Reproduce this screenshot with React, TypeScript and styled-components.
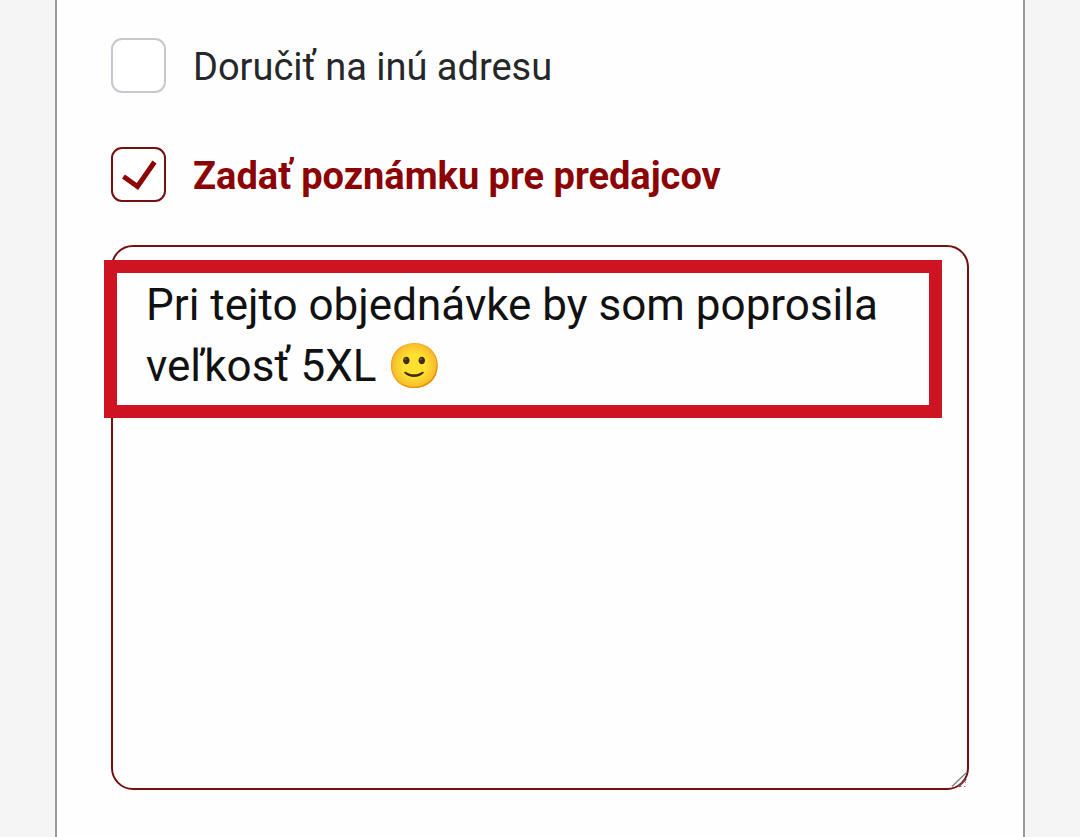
import React, { useState } from "react";
import styled, { createGlobalStyle } from "styled-components";

const GlobalStyle = createGlobalStyle`
  *, *::before, *::after { box-sizing: border-box; }
  html { background: #f5f5f5; }
  body {
    margin: 0;
    font-family: Roboto, "Liberation Sans", sans-serif;
    color: #222426;
  }
`;

const Page = styled.div`
  padding: 0 55px;
`;

const Panel = styled.main`
  min-height: 100vh;
  padding: 38px 54px 47px;
  background: #fefefe;
  border: solid #999b9d;
  border-width: 0 2px;
`;

const Option = styled.label<{ $active: boolean }>`
  display: flex;
  align-items: center;
  gap: 27px;
  height: 55px;
  margin-bottom: 54px;
  font-size: 38px;
  line-height: 48px;
  font-weight: ${(p) => (p.$active ? 700 : 400)};
  color: ${(p) => (p.$active ? "#8b0304" : "#252729")};
  cursor: pointer;
`;

const OptionText = styled.span`
  padding-top: 3px;
`;

const BoxWrap = styled.span`
  display: grid;
  flex: none;
  width: 55px;
  height: 55px;

  & > * {
    grid-area: 1 / 1;
  }
`;

const Box = styled.input`
  appearance: none;
  width: 55px;
  height: 55px;
  margin: 0;
  background: #fff;
  border: 2px solid #c5c9cf;
  border-radius: 11px;
  cursor: pointer;

  &:checked {
    border-color: #74100f;
  }
`;

const Tick = styled.svg`
  width: 55px;
  height: 55px;
  pointer-events: none;
`;

const Field = styled.div`
  position: relative;
  display: flex;
  margin-top: -11px;
`;

const Note = styled.textarea`
  display: block;
  width: 100%;
  height: 545px;
  padding: 28px 33px;
  background: #fefefe;
  border: 2px solid #74100f;
  border-radius: 22px;
  outline: none;
  resize: vertical;
  font-family: Roboto, "Liberation Sans", "Noto Color Emoji", sans-serif;
  font-size: 44px;
  line-height: 61px;
  color: #111;

  &::-webkit-resizer {
    background: transparent;
  }
`;

const Grip = styled.svg`
  position: absolute;
  right: 0;
  bottom: 0;
  width: 18px;
  height: 18px;
  pointer-events: none;
`;

const Highlight = styled.div`
  position: absolute;
  top: 15px;
  left: -7px;
  right: 27px;
  height: 158px;
  border: 13px solid #ce1322;
  pointer-events: none;
`;

type CheckProps = {
  label: string;
  checked: boolean;
  onChange: (next: boolean) => void;
};

function CheckOption({ label, checked, onChange }: CheckProps) {
  return (
    <Option $active={checked}>
      <BoxWrap>
        <Box
          type="checkbox"
          checked={checked}
          onChange={(e) => onChange(e.target.checked)}
        />
        {checked && (
          <Tick viewBox="0 0 55 55" aria-hidden="true">
            <path
              d="M12.5 29.5 L26.5 39.5 L43.5 15"
              fill="none"
              stroke="#8b0304"
              strokeWidth="5"
            />
          </Tick>
        )}
      </BoxWrap>
      <OptionText>{label}</OptionText>
    </Option>
  );
}

export default function App() {
  const [otherAddress, setOtherAddress] = useState(false);
  const [withNote, setWithNote] = useState(true);
  const [note, setNote] = useState(
    "Pri tejto objednávke by som poprosila veľkosť 5XL 🙂"
  );

  return (
    <>
      <GlobalStyle />
      <Page>
        <Panel>
          <CheckOption
            label="Doručiť na inú adresu"
            checked={otherAddress}
            onChange={setOtherAddress}
          />
          <CheckOption
            label="Zadať poznámku pre predajcov"
            checked={withNote}
            onChange={setWithNote}
          />
          {withNote && (
            <Field>
              <Note
                aria-label="Poznámka pre predajcov"
                spellCheck={false}
                value={note}
                onChange={(e) => setNote(e.target.value)}
              />
              <Grip viewBox="0 0 18 18" aria-hidden="true">
                <path d="M1 14.5 L15 1" stroke="#77797c" strokeWidth="1.2" />
                <path d="M7.5 14.5 L15 7" stroke="#7d3a3c" strokeWidth="2" />
                <path
                  d="M9 14.5h1.5M13 14.5h1.5M14 10.5h1"
                  stroke="#85787a"
                  strokeWidth="1.2"
                />
              </Grip>
              <Highlight />
            </Field>
          )}
        </Panel>
      </Page>
    </>
  );
}
